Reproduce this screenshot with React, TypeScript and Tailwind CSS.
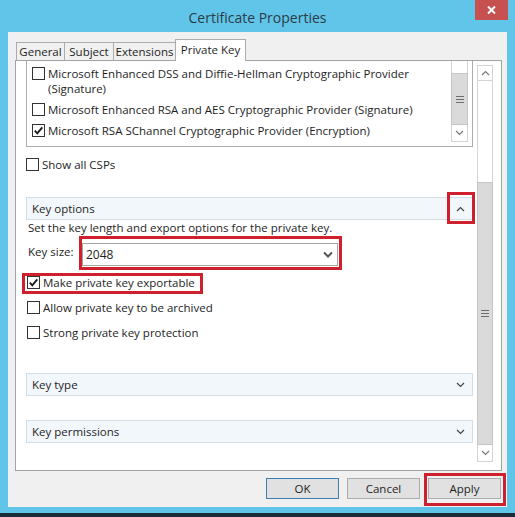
import type { ReactNode } from 'react';

const RED = 'border-[#cf202e]';

function Chevron({ dir, className = '' }: { dir: 'up' | 'down'; className?: string }) {
  return (
    <svg width="9" height="6" viewBox="0 0 9 6" className={className}>
      <polyline
        points={dir === 'up' ? '1,5 4.5,1.5 8,5' : '1,1 4.5,4.5 8,1'}
        fill="none"
        stroke="currentColor"
        strokeWidth="1.2"
      />
    </svg>
  );
}

function Grip() {
  return (
    <svg width="8" height="7" viewBox="0 0 8 7" className="text-[#6d6d6d]">
      <line x1="0" y1="0.5" x2="8" y2="0.5" stroke="currentColor" />
      <line x1="0" y1="3.5" x2="8" y2="3.5" stroke="currentColor" />
      <line x1="0" y1="6.5" x2="8" y2="6.5" stroke="currentColor" />
    </svg>
  );
}

function Box({ checked = false }: { checked?: boolean }) {
  return (
    <span className="w-[13px] h-[13px] shrink-0 border border-[#333] bg-white flex items-center justify-center">
      {checked && (
        <svg width="11" height="11" viewBox="0 0 11 11">
          <polyline points="1.8,5.6 4.3,8.3 9.3,2.3" fill="none" stroke="#1a1a1a" strokeWidth="1.9" />
        </svg>
      )}
    </span>
  );
}

function Check({ label, checked, className = '', children }: { label: string; checked?: boolean; className?: string; children?: ReactNode }) {
  return (
    <div className={`relative h-[15px] flex items-center gap-[3px] leading-[15px] ${className}`}>
      <Box checked={checked} />
      <span>{label}</span>
      {children}
    </div>
  );
}

function Section({ title, open, className = '', children }: { title: string; open?: boolean; className?: string; children?: ReactNode }) {
  return (
    <div className={`relative h-[23px] flex items-center justify-between pl-[5px] pr-[7px] bg-[#f2f7fb] border border-[#d3dee7] ${className}`}>
      <span>{title}</span>
      <Chevron dir={open ? 'up' : 'down'} className="text-[#444]" />
      {children}
    </div>
  );
}

function Button({ label, primary, children }: { label: string; primary?: boolean; children?: ReactNode }) {
  return (
    <div
      className={`relative w-[73px] h-[21px] flex items-center justify-center bg-[#e1e1e1] border ${
        primary ? 'border-[#3c7fb1]' : 'border-[#adadad]'
      }`}
    >
      {label}
      {children}
    </div>
  );
}

export default function App() {
  return (
    <div className="w-[515px] h-[517px] flex flex-col bg-[#60c5e9] font-['Open_Sans',sans-serif] text-[11.5px] text-[#1e1e1e]">
      {/* title bar */}
      <div className="relative h-[32px] flex items-center justify-center pt-[2px]">
        <span className="text-[14px] text-[#2d3b45]">Certificate Properties</span>
        <div className="absolute top-0 right-[7px] w-[33px] h-[20px] bg-[#c75050] flex items-center justify-center">
          <svg width="9" height="8" viewBox="0 0 9 8">
            <line x1="1" y1="0.5" x2="8" y2="7.5" stroke="white" strokeWidth="2" />
            <line x1="8" y1="0.5" x2="1" y2="7.5" stroke="white" strokeWidth="2" />
          </svg>
        </div>
      </div>

      {/* client area */}
      <div className="mx-[8px] h-[475px] bg-[#f0f0f0] flex flex-col">
        {/* tabs */}
        <div className="flex items-end pt-[7px] pl-[8px] h-[28px]">
          <div className="h-[18px] w-[49px] flex items-center justify-center border border-b-0 border-[#acacac] bg-[#f0f0f0]">General</div>
          <div className="h-[18px] w-[50px] -ml-px flex items-center justify-center border border-b-0 border-[#acacac] bg-[#f0f0f0]">Subject</div>
          <div className="h-[18px] w-[63px] -ml-px flex items-center justify-center border border-b-0 border-[#acacac] bg-[#f0f0f0]">Extensions</div>
          <div className="relative z-10 h-[22px] w-[71px] -ml-px -mb-px flex items-center justify-center border border-b-0 border-[#acacac] bg-white pb-[2px]">
            Private Key
          </div>
        </div>

        {/* tab panel */}
        <div className="ml-[7px] w-[487px] h-[411px] bg-white border border-[#a3a3a3] flex">
          <div className="w-[457px] pl-[10px] flex flex-col">
            {/* provider list */}
            <div className="w-[447px] h-[86px] border-x border-b border-[#acacac] flex">
              <div className="flex-1 pl-[5px] pt-[5px] flex flex-col gap-[6px] leading-[15px]">
                <div className="flex gap-[3px]">
                  <div className="h-[15px] flex items-center">
                    <Box />
                  </div>
                  <span>
                    Microsoft Enhanced DSS and Diffie-Hellman Cryptographic Provider
                    <br />
                    (Signature)
                  </span>
                </div>
                <Check label="Microsoft Enhanced RSA and AES Cryptographic Provider (Signature)" />
                <Check label="Microsoft RSA SChannel Cryptographic Provider (Encryption)" checked />
              </div>
              <div className="w-[17px] mr-[4px] mb-[4px] flex flex-col">
                <div className="h-[12px] border-x border-[#d4d4d4]" />
                <div className="flex-1 bg-[#dadada] border border-[#c6c6c6] flex items-center justify-center">
                  <Grip />
                </div>
                <div className="h-[17px] border-x border-b border-[#d4d4d4] flex items-center justify-center text-[#777]">
                  <Chevron dir="down" />
                </div>
              </div>
            </div>

            <Check label="Show all CSPs" className="mt-[10px]" />

            <Section title="Key options" open className="mt-[25px]">
              <div className={`absolute right-[-3px] top-[-6px] w-[28px] h-[32px] border-[3px] ${RED}`} />
            </Section>

            <div className="h-[16px] leading-[16px] pl-[2px]">Set the key length and export options for the private key.</div>

            <div className="mt-[7px] flex items-start pl-[2px]">
              <span className="w-[54px] mt-[1px] leading-[15px]">Key size:</span>
              <div className="relative w-[256px] h-[23px] border border-[#a5a5a5] flex items-center justify-between pl-[3px] pr-[4px]">
                <span className="text-[12px]">2048</span>
                <svg width="10" height="7" viewBox="0 0 10 7">
                  <polyline points="1,1.5 5,5.5 9,1.5" fill="none" stroke="#555" strokeWidth="2" />
                </svg>
                <div className={`absolute -left-[4px] -top-[8px] -right-[5px] -bottom-[5px] border-[3px] ${RED}`} />
              </div>
            </div>

            <Check label="Make private key exportable" checked className="mt-[9px] ml-[1px]">
              <div className={`absolute -left-[5px] -top-[2px] w-[181px] h-[21px] border-[3px] ${RED}`} />
            </Check>
            <Check label="Allow private key to be archived" className="mt-[10px] ml-[1px]" />
            <Check label="Strong private key protection" className="mt-[10px] ml-[1px]" />

            <Section title="Key type" className="mt-[33px]" />
            <Section title="Key permissions" className="mt-[24px]" />
          </div>

          {/* outer scrollbar */}
          <div className="ml-[4px] mt-[4px] w-[16px] h-[397px] flex flex-col">
            <div className="h-[16px] border border-[#d4d4d4] flex items-center justify-center text-[#777]">
              <Chevron dir="up" />
            </div>
            <div className="h-[101px] border-x border-[#d4d4d4]" />
            <div className="h-[263px] bg-[#dadada] border border-[#c6c6c6] flex items-center justify-center">
              <Grip />
            </div>
            <div className="h-[17px] border-x border-b border-[#d4d4d4] flex items-center justify-center text-[#777]">
              <Chevron dir="down" />
            </div>
          </div>
        </div>

        {/* buttons */}
        <div className="mt-[7px] flex justify-end gap-[8px] pr-[6px]">
          <Button label="OK" primary />
          <Button label="Cancel" />
          <Button label="Apply">
            <div className={`absolute -left-[5px] -top-[6px] -right-[6px] -bottom-[8px] border-[3px] ${RED}`} />
          </Button>
        </div>
      </div>

      <div className="h-[6px]" />
      <div className="flex-1 bg-[#1c2b37]" />
    </div>
  );
}
